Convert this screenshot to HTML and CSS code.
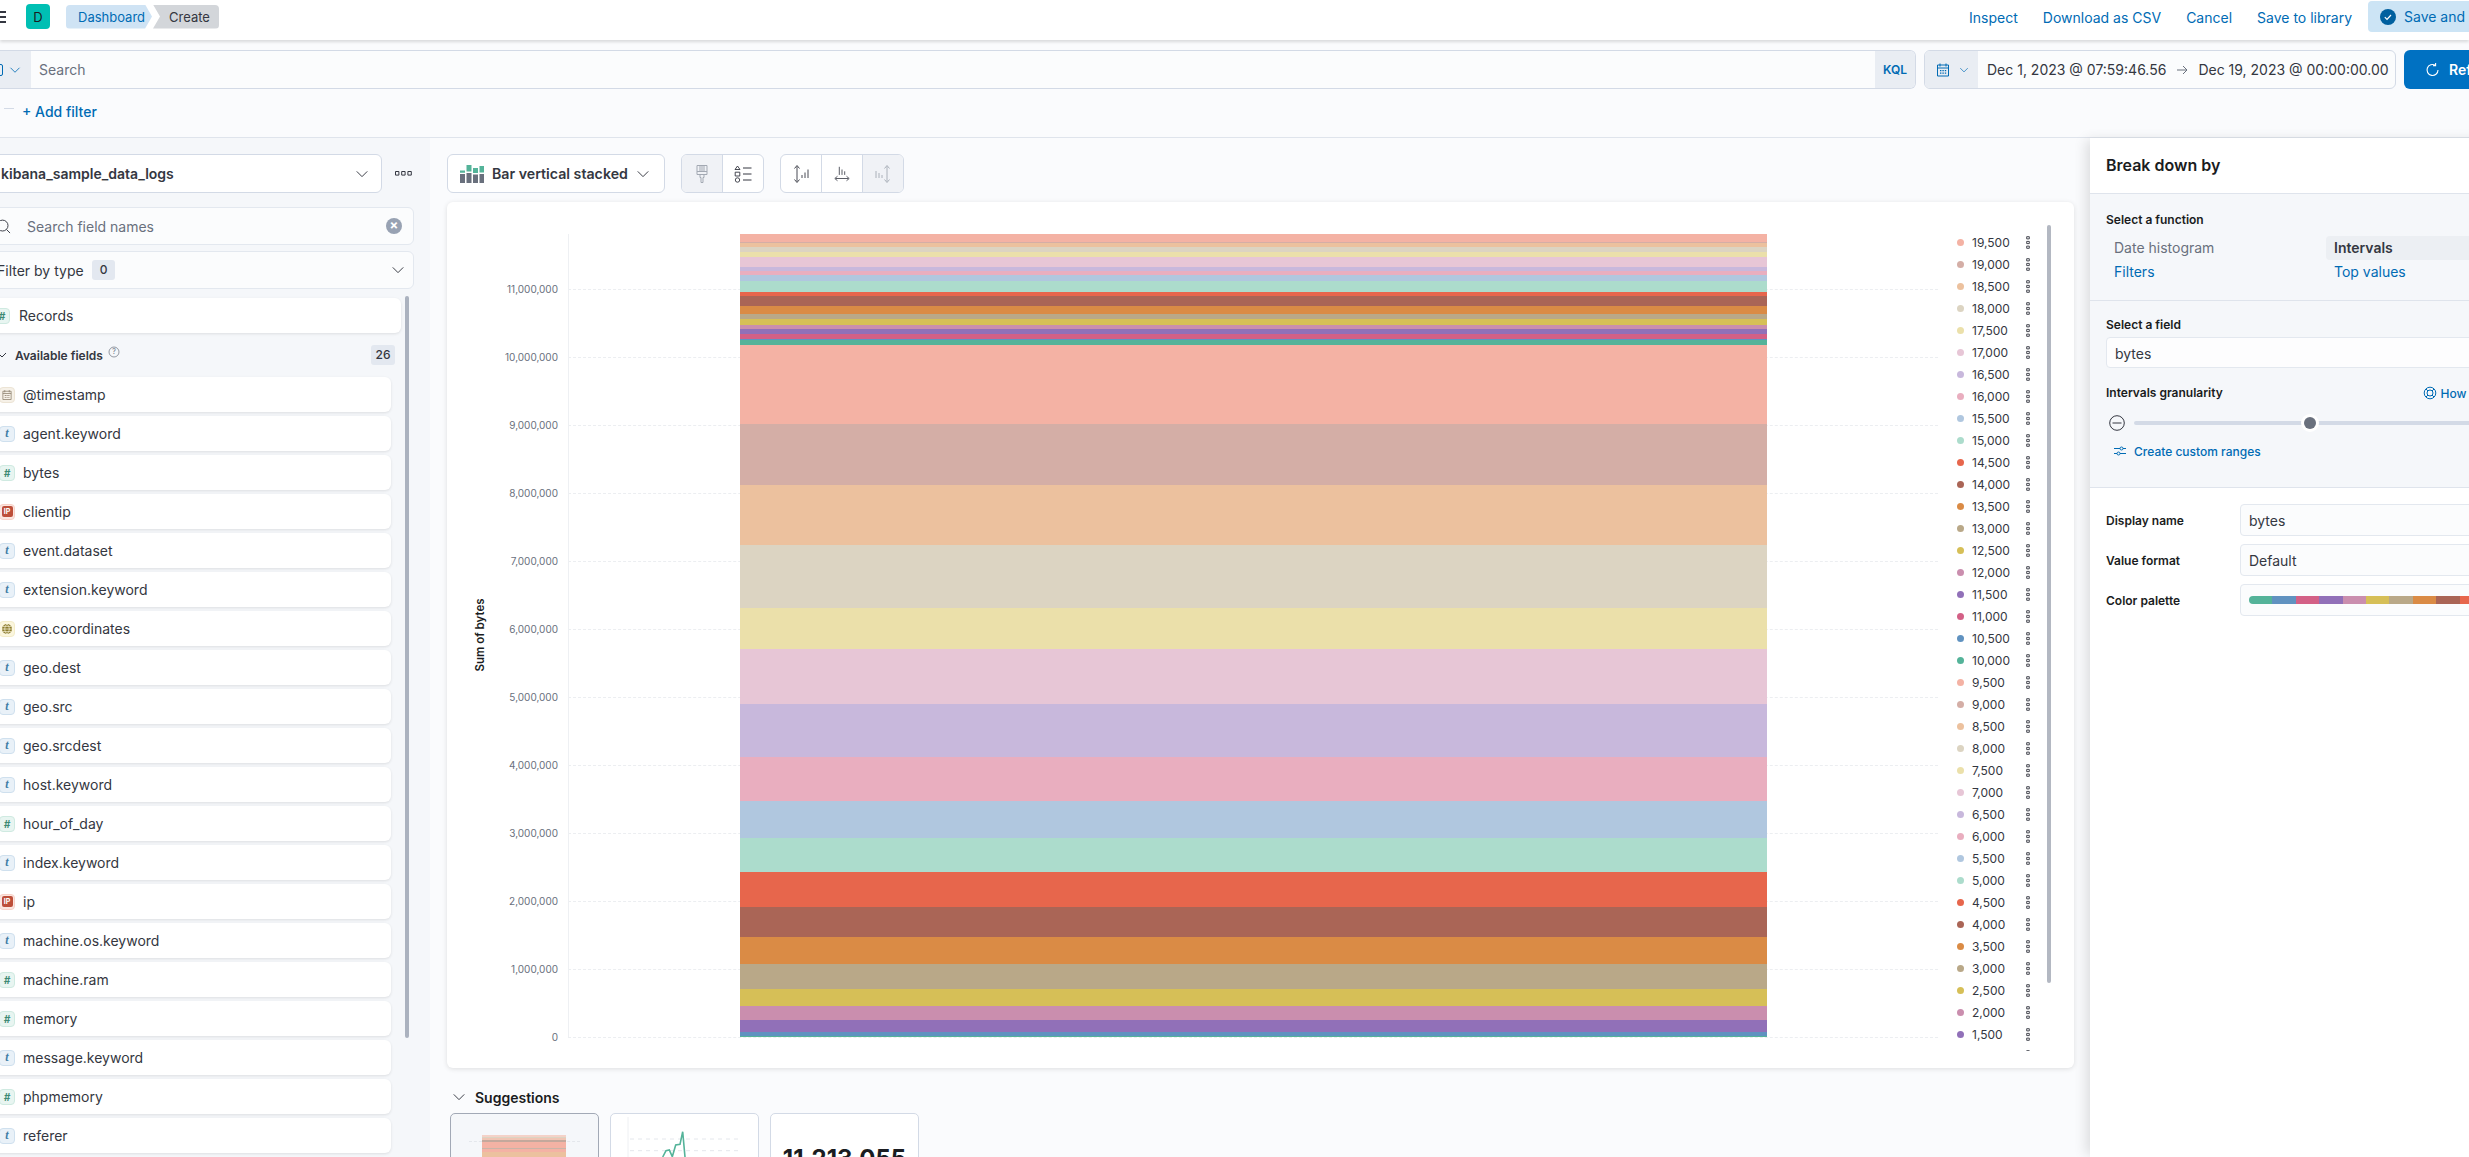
FILE: index.html
```html
<!DOCTYPE html>
<html lang="en">
<head>
  <meta charset="UTF-8" />
  <meta name="viewport" content="width=device-width, initial-scale=1.0" />
  <title>Create - Dashboard</title>
  <link rel="stylesheet" href="styles.css">
</head>

<body>
  <!-- shared icons -->
  <svg class="sprite" aria-hidden="true">
    <symbol id="chev" viewBox="0 0 16 16"><path d="M2 5l6 6 6-6" fill="none" stroke="currentColor" stroke-width="1.1"/></symbol>
    <symbol id="kebab" viewBox="0 0 4 13"><path d="M.7.7h2.6v2.2H.7zM.7 5.4h2.6v2.2H.7zM.7 10.1h2.6v2.2H.7z" fill="none" stroke="currentColor" stroke-width=".9"/></symbol>
    <symbol id="cal" viewBox="0 0 16 16"><path d="M2.5 3h11v11h-11zM2.5 6h11M5 1.5v3M11 1.5v3" fill="none" stroke="currentColor"/><path d="M5 8h1.4v1.2H5zM7.4 8h1.4v1.2H7.4zM9.8 8h1.4v1.2H9.8zM5 10.6h1.4v1.2H5zM7.4 10.6h1.4v1.2H7.4zM9.8 10.6h1.4v1.2H9.8z" fill="currentColor"/></symbol>
  </svg>

  <!-- Top bar -->
  <header class="topbar">
    <div class="burger"><span></span><span></span><span></span></div>
    <div class="avatar">D</div>
    <nav class="crumbs">
      <a class="crumb crumb-link">Dashboard</a>
      <span class="crumb crumb-here">Create</span>
    </nav>
    <div class="top-links">
      <a>Inspect</a>
      <a>Download as CSV</a>
      <a>Cancel</a>
      <a>Save to library</a>
    </div>
    <button class="save-btn">
      <svg viewBox="0 0 16 16"><circle cx="8" cy="8" r="8" fill="#00609f"/><path d="M4.8 8.2l2.2 2.2 4-4.4" fill="none" stroke="#fff" stroke-width="1.2"/></svg>
      Save and return
    </button>
  </header>

  <!-- Query bar -->
  <section class="query">
    <div class="query-row">
      <div class="search-group">
        <div class="saved-btn"><span class="saved-icon"></span><svg class="icon-12"><use href="#chev"/></svg></div>
        <div class="search-input">Search</div>
        <div class="kql">KQL</div>
      </div>
      <div class="date-group">
        <div class="date-btn">
          <svg class="icon-16"><use href="#cal"/></svg>
          <svg class="icon-10"><use href="#chev"/></svg>
        </div>
        <div class="date-range">
          <span>Dec 1, 2023 @ 07:59:46.56</span>
          <svg class="date-arrow" viewBox="0 0 12 12"><path d="M1 6h10M7 2l4 4-4 4" fill="none" stroke="currentColor"/></svg>
          <span>Dec 19, 2023 @ 00:00:00.00</span>
        </div>
      </div>
      <button class="refresh">
        <svg viewBox="0 0 16 16"><path d="M13 8a5.5 5.5 0 1 1-2.6-4.7M10.6 1v2.6H8" fill="none" stroke="#fff" stroke-width="1.1"/></svg>
        Refresh
      </button>
    </div>
    <div class="filter-row">
      <span class="filter-dash"></span>
      <a class="add-filter">+ Add filter</a>
    </div>
  </section>

  <div class="workspace">

    <!-- Field list -->
    <aside class="sidebar">
      <div class="dataview-row">
        <div class="dataview">
          <span>kibana_sample_data_logs</span>
          <svg class="icon-14"><use href="#chev"/></svg>
        </div>
        <svg class="dots" viewBox="0 0 17 5"><path d="M.5.5h3.4v3.6H.5zM6.7.5h3.4v3.6H6.7zM12.9.5h3.4v3.6h-3.4z" fill="none" stroke="#343741"/></svg>
      </div>
      <div class="field-search">
        <svg class="mag" viewBox="0 0 16 16"><circle cx="7" cy="7" r="5.8" fill="none" stroke="#343741"/><path d="M11.2 11.2l3.8 3.8" stroke="#343741"/></svg>
        <span class="field-search-text">Search field names</span>
        <span class="clear">&times;</span>
      </div>
      <div class="filter-type">
        <span>Filter by type</span>
        <span class="count">0</span>
        <svg class="icon-14 push"><use href="#chev"/></svg>
      </div>
      <div class="field records"><span class="ftype ftype-num">#</span>Records</div>
      <div class="avail">
        <svg class="avail-chev" viewBox="0 0 10 10"><path d="M1 3l4 4 4-4" fill="none" stroke="#343741"/></svg>
        <b>Available fields</b>
        <svg class="help" viewBox="0 0 12 12"><circle cx="6" cy="6" r="5" fill="none" stroke="#69707d" stroke-width=".7"/><text x="6" y="8.2" text-anchor="middle">?</text></svg>
        <span class="avail-count">26</span>
      </div>
      <ul class="fields">
        <li class="field"><span class="ftype ftype-date"><svg class="icon-12"><use href="#cal"/></svg></span>@timestamp</li>
        <li class="field"><span class="ftype ftype-text">t</span>agent.keyword</li>
        <li class="field"><span class="ftype ftype-num">#</span>bytes</li>
        <li class="field"><span class="ftype ftype-ip"><i>IP</i></span>clientip</li>
        <li class="field"><span class="ftype ftype-text">t</span>event.dataset</li>
        <li class="field"><span class="ftype ftype-text">t</span>extension.keyword</li>
        <li class="field"><span class="ftype ftype-geo"><svg viewBox="0 0 12 12"><circle cx="6" cy="6" r="5" fill="#8c7c2e"/><path d="M1 6h10M2 3.4h8M2 8.6h8M6 1c-3 3-3 7 0 10M6 1c3 3 3 7 0 10" fill="none" stroke="#fbf6de" stroke-width=".7"/></svg></span>geo.coordinates</li>
        <li class="field"><span class="ftype ftype-text">t</span>geo.dest</li>
        <li class="field"><span class="ftype ftype-text">t</span>geo.src</li>
        <li class="field"><span class="ftype ftype-text">t</span>geo.srcdest</li>
        <li class="field"><span class="ftype ftype-text">t</span>host.keyword</li>
        <li class="field"><span class="ftype ftype-num">#</span>hour_of_day</li>
        <li class="field"><span class="ftype ftype-text">t</span>index.keyword</li>
        <li class="field"><span class="ftype ftype-ip"><i>IP</i></span>ip</li>
        <li class="field"><span class="ftype ftype-text">t</span>machine.os.keyword</li>
        <li class="field"><span class="ftype ftype-num">#</span>machine.ram</li>
        <li class="field"><span class="ftype ftype-num">#</span>memory</li>
        <li class="field"><span class="ftype ftype-text">t</span>message.keyword</li>
        <li class="field"><span class="ftype ftype-num">#</span>phpmemory</li>
        <li class="field"><span class="ftype ftype-text">t</span>referer</li>
      </ul>
      <div class="side-scroll"></div>
    </aside>

    <!-- Chart area -->
    <main class="main">
      <div class="toolbar">
        <div class="chart-switch">
          <svg class="bar-icon" viewBox="0 0 24 18">
            <path d="M0 9h5v9H0zM6.500 8h5v10h-5zM13 9.500h5V18h-5zM19.500 9h4.500v9h-4.500z" fill="#69707d"/>
            <path d="M0 5.500h5v2.300H0zM6.500 0h5v6.500h-5zM13 3h5v5h-5zM19.500 1h4.500v6.500h-4.500z" fill="#54b399"/>
          </svg>
          <span>Bar vertical stacked</span>
          <svg class="icon-14"><use href="#chev"/></svg>
        </div>
        <div class="btn-group">
          <div class="tool tool-off">
            <svg viewBox="0 0 16 20"><path d="M3 1.500h10v9H3zM3 7.500h10M6 1.500v6M8 1.500v6M10 1.500v6M6 10.500v3h1v5h2v-5h1v-3" fill="none" stroke="#a3a9b3"/></svg>
          </div>
          <div class="tool">
            <svg viewBox="0 0 18 18"><path d="M3.500 1L6 4.500H1zM1.200 7.200h4.600v3.800H1.200z" fill="none" stroke="#343741" stroke-width=".9"/><circle cx="3.500" cy="15" r="2.200" fill="none" stroke="#343741" stroke-width=".9"/><path d="M9 3h8.500M9 9h8.500M9 15h8.500" stroke="#343741"/></svg>
          </div>
        </div>
        <div class="btn-group">
          <div class="tool">
            <svg viewBox="0 0 18 20"><path d="M5 2.500v15M2.500 4.500L5 1.500l2.500 3M2.500 15.500L5 18.500l2.500-3M10 11v3M13 8.500v5.500M16 5.500v8.500" fill="none" stroke="#343741" stroke-width=".9"/></svg>
          </div>
          <div class="tool">
            <svg viewBox="0 0 20 20"><path d="M3 15h14M5 12.500L2 15l3 2.500M15 12.500l3 2.500-3 2.500M7 2v9M10 5v6M13 7v4" fill="none" stroke="#343741" stroke-width=".9"/></svg>
          </div>
          <div class="tool tool-off">
            <svg viewBox="0 0 18 20"><path d="M13 2.500v15M10.500 4.500l2.500-3 2.500 3M10.500 15.500l2.500 3 2.500-3M2 7v7M5 9v5M8 11v3" fill="none" stroke="#a3a9b3" stroke-width=".9"/></svg>
          </div>
        </div>
      </div>

      <div class="chart-card">
        <div class="plot">
          <div class="axis-title">Sum of bytes</div>
          <div class="axis-line"></div>
          <div class="ticks">
            <div class="tick"><span>11,000,000</span><i></i></div>
            <div class="tick"><span>10,000,000</span><i></i></div>
            <div class="tick"><span>9,000,000</span><i></i></div>
            <div class="tick"><span>8,000,000</span><i></i></div>
            <div class="tick"><span>7,000,000</span><i></i></div>
            <div class="tick"><span>6,000,000</span><i></i></div>
            <div class="tick"><span>5,000,000</span><i></i></div>
            <div class="tick"><span>4,000,000</span><i></i></div>
            <div class="tick"><span>3,000,000</span><i></i></div>
            <div class="tick"><span>2,000,000</span><i></i></div>
            <div class="tick"><span>1,000,000</span><i></i></div>
            <div class="tick"><span>0</span><i></i></div>
          </div>
          <div class="bar">
            <div class="s1" style="height:7.7px"></div>
            <div class="s2" style="height:1.7px"></div>
            <div class="s3" style="height:4px"></div>
            <div class="s4" style="height:5px"></div>
            <div class="s5" style="height:4.7px"></div>
            <div class="s6" style="height:9.6px"></div>
            <div class="s7" style="height:4.3px"></div>
            <div class="s8" style="height:4.4px"></div>
            <div class="s9" style="height:6px"></div>
            <div class="s10" style="height:10.6px"></div>
            <div class="s11" style="height:3.7px"></div>
            <div class="s12" style="height:10.3px"></div>
            <div class="s13" style="height:8px"></div>
            <div class="s14" style="height:5.3px"></div>
            <div class="s15" style="height:5.7px"></div>
            <div class="s16" style="height:4.3px"></div>
            <div class="s17" style="height:4.3px"></div>
            <div class="s18" style="height:5.3px"></div>
            <div class="s19" style="height:1.4px"></div>
            <div class="s20" style="height:4.7px"></div>
            <div class="s1" style="height:79px"></div>
            <div class="s2" style="height:61px"></div>
            <div class="s3" style="height:60px"></div>
            <div class="s4" style="height:63px"></div>
            <div class="s5" style="height:41px"></div>
            <div class="s6" style="height:55px"></div>
            <div class="s7" style="height:53px"></div>
            <div class="s8" style="height:44px"></div>
            <div class="s9" style="height:37px"></div>
            <div class="s10" style="height:34px"></div>
            <div class="s11" style="height:35px"></div>
            <div class="s12" style="height:30px"></div>
            <div class="s13" style="height:27px"></div>
            <div class="s14" style="height:25px"></div>
            <div class="s15" style="height:17px"></div>
            <div class="s16" style="height:14.5px"></div>
            <div class="s17" style="height:11.5px"></div>
            <div class="s19" style="height:4px"></div>
            <div class="s20" style="height:1px"></div>
          </div>
        </div>

        <ul class="legend">
          <li><i></i><span>19,500</span><svg><use href="#kebab"/></svg></li>
          <li><i></i><span>19,000</span><svg><use href="#kebab"/></svg></li>
          <li><i></i><span>18,500</span><svg><use href="#kebab"/></svg></li>
          <li><i></i><span>18,000</span><svg><use href="#kebab"/></svg></li>
          <li><i></i><span>17,500</span><svg><use href="#kebab"/></svg></li>
          <li><i></i><span>17,000</span><svg><use href="#kebab"/></svg></li>
          <li><i></i><span>16,500</span><svg><use href="#kebab"/></svg></li>
          <li><i></i><span>16,000</span><svg><use href="#kebab"/></svg></li>
          <li><i></i><span>15,500</span><svg><use href="#kebab"/></svg></li>
          <li><i></i><span>15,000</span><svg><use href="#kebab"/></svg></li>
          <li><i></i><span>14,500</span><svg><use href="#kebab"/></svg></li>
          <li><i></i><span>14,000</span><svg><use href="#kebab"/></svg></li>
          <li><i></i><span>13,500</span><svg><use href="#kebab"/></svg></li>
          <li><i></i><span>13,000</span><svg><use href="#kebab"/></svg></li>
          <li><i></i><span>12,500</span><svg><use href="#kebab"/></svg></li>
          <li><i></i><span>12,000</span><svg><use href="#kebab"/></svg></li>
          <li><i></i><span>11,500</span><svg><use href="#kebab"/></svg></li>
          <li><i></i><span>11,000</span><svg><use href="#kebab"/></svg></li>
          <li><i></i><span>10,500</span><svg><use href="#kebab"/></svg></li>
          <li><i></i><span>10,000</span><svg><use href="#kebab"/></svg></li>
          <li><i></i><span>9,500</span><svg><use href="#kebab"/></svg></li>
          <li><i></i><span>9,000</span><svg><use href="#kebab"/></svg></li>
          <li><i></i><span>8,500</span><svg><use href="#kebab"/></svg></li>
          <li><i></i><span>8,000</span><svg><use href="#kebab"/></svg></li>
          <li><i></i><span>7,500</span><svg><use href="#kebab"/></svg></li>
          <li><i></i><span>7,000</span><svg><use href="#kebab"/></svg></li>
          <li><i></i><span>6,500</span><svg><use href="#kebab"/></svg></li>
          <li><i></i><span>6,000</span><svg><use href="#kebab"/></svg></li>
          <li><i></i><span>5,500</span><svg><use href="#kebab"/></svg></li>
          <li><i></i><span>5,000</span><svg><use href="#kebab"/></svg></li>
          <li><i></i><span>4,500</span><svg><use href="#kebab"/></svg></li>
          <li><i></i><span>4,000</span><svg><use href="#kebab"/></svg></li>
          <li><i></i><span>3,500</span><svg><use href="#kebab"/></svg></li>
          <li><i></i><span>3,000</span><svg><use href="#kebab"/></svg></li>
          <li><i></i><span>2,500</span><svg><use href="#kebab"/></svg></li>
          <li><i></i><span>2,000</span><svg><use href="#kebab"/></svg></li>
          <li><i></i><span>1,500</span><svg><use href="#kebab"/></svg></li>
          <li><i></i><span>1,000</span><svg><use href="#kebab"/></svg></li>
        </ul>
        <div class="legend-scroll"></div>
      </div>

      <div class="sugg-title">
        <svg class="icon-14"><use href="#chev"/></svg>
        <b>Suggestions</b>
      </div>
      <div class="sugg-row">
        <div class="sugg sugg-active">
          <i class="sugg-grid"></i>
          <div class="sugg-bar"></div>
        </div>
        <div class="sugg">
          <svg class="sugg-line" viewBox="0 0 149 44">
            <path d="M18 4v40" stroke="#eef0f3" fill="none"/>
            <path d="M20 26h112M20 37.700h112" stroke="#e4e7ec" stroke-dasharray="4 4" fill="none"/>
            <path d="M52.700 44L56 37.700 59.300 37 62.300 43.700 65.700 32 70 31.300 72.700 18.700 75 44" stroke="#54b399" stroke-width="1.600" fill="none"/>
          </svg>
        </div>
        <div class="sugg sugg-num">11,213,055</div>
      </div>
    </main>

    <!-- Dimension panel -->
    <aside class="panel">
      <h2 class="panel-head">Break down by</h2>
      <section class="panel-fn">
        <div class="lbl">Select a function</div>
        <div class="fn-grid">
          <span class="fn fn-off">Date histogram</span>
          <span class="fn fn-on">Intervals</span>
          <a class="fn">Filters</a>
          <a class="fn">Top values</a>
        </div>
      </section>
      <section class="panel-field">
        <div class="lbl">Select a field</div>
        <div class="box box-field">bytes</div>
        <div class="gran-head">
          <div class="lbl">Intervals granularity</div>
          <a class="how">
            <svg viewBox="0 0 14 14"><circle cx="7" cy="7" r="5.800" fill="none" stroke="#006bb4"/><circle cx="7" cy="7" r="3" fill="none" stroke="#006bb4"/><path d="M3 3l2 2M11 3L9 5M3 11l2-2M11 11L9 9" stroke="#006bb4"/></svg>
            How it works
          </a>
        </div>
        <div class="slider">
          <svg class="minus" viewBox="0 0 16 16"><circle cx="8" cy="8" r="7.300" fill="none" stroke="#343741"/><path d="M3.500 8h9" stroke="#343741"/></svg>
          <div class="track"><span class="thumb"></span></div>
        </div>
        <a class="custom">
          <svg viewBox="0 0 14 14"><path d="M1 4.500h6M10 4.500h3M1 9.500h3M7 9.500h6" stroke="#006bb4"/><circle cx="8.500" cy="4.500" r="1.500" fill="none" stroke="#006bb4"/><circle cx="5.500" cy="9.500" r="1.500" fill="none" stroke="#006bb4"/></svg>
          Create custom ranges
        </a>
      </section>
      <section class="panel-style">
        <div class="style-row"><label>Display name</label><div class="box">bytes</div></div>
        <div class="style-row"><label>Value format</label><div class="box">Default</div></div>
        <div class="style-row">
          <label>Color palette</label>
          <div class="box">
            <div class="palette">
              <i class="s20"></i><i class="s19"></i><i class="s18"></i><i class="s17"></i><i class="s16"></i><i class="s15"></i><i class="s14"></i><i class="s13"></i><i class="s12"></i><i class="s11"></i>
            </div>
          </div>
        </div>
      </section>
    </aside>
  </div>
</body>
</html>
```

FILE: styles.css
```css
/* ---------- Page ---------- */
:root {
  --c1: #f4b2a4; --c2: #d4aea6; --c3: #ecc19e; --c4: #dcd4c2; --c5: #ebe0aa;
  --c6: #e7c6d6; --c7: #c8b8dc; --c8: #e9aebf; --c9: #b0c7df; --c10: #acdccc;
  --c11: #e7664c; --c12: #aa6556; --c13: #da8b45; --c14: #b9a888; --c15: #d6bf57;
  --c16: #ca8eae; --c17: #9170b8; --c18: #d36086; --c19: #6092c0; --c20: #54b399;
  --link: #006bb4;
  --text: #343741;
  --line: #d3dae6;
}
html, body { height: 100%; overflow: hidden; }
body {
  margin: 0;
  font-family: Inter, "Noto Sans", sans-serif;
  font-size: 14px;
  color: var(--text);
  background: #fafbfd;
  display: flex;
  flex-direction: column;
}
ul { list-style: none; margin: 0; padding: 0; }
a { color: var(--link); }
button { font: inherit; border: 0; }
.sprite { display: none; }
.icon-10 { width: 10px; height: 10px; }
.icon-12 { width: 12px; height: 12px; }
.icon-14 { width: 14px; height: 14px; flex: none; }
.icon-16 { width: 16px; height: 16px; }
.push { margin-left: auto; }

/* ---------- Top bar ---------- */
.topbar {
  height: 40px;
  flex: none;
  display: flex;
  align-items: center;
  background: #fff;
  box-shadow: 0 2px 3px #0002;
  position: relative;
  z-index: 2;
}
.burger {
  width: 16px;
  margin-left: -10px;
  margin-top: -7px;
  display: flex;
  flex-direction: column;
  gap: 3px;
}
.burger span { height: 2px; background: #343741; }
.avatar {
  width: 24px;
  height: 25px;
  margin-left: 20px;
  margin-top: -7px;
  border-radius: 4px;
  background: #00bfb3;
  color: #1a1c21;
  font-size: 13px;
  display: flex;
  align-items: center;
  justify-content: center;
}
.crumbs { display: flex; margin-left: 16px; margin-top: -7px; }
.crumb {
  height: 24px;
  display: flex;
  align-items: center;
  font-size: 13px;
}
.crumb-link {
  width: 86px;
  padding-left: 12px;
  box-sizing: border-box;
  background: #cfe3f4;
  color: var(--link);
  border-radius: 4px 0 0 4px;
  clip-path: polygon(0 0, 92% 0, 100% 50%, 92% 100%, 0 100%);
}
.crumb-here {
  width: 66px;
  padding-left: 16px;
  box-sizing: border-box;
  margin-left: 1px;
  background: #d3d6da;
  border-radius: 0 4px 4px 0;
  clip-path: polygon(0 0, 100% 0, 100% 100%, 0 100%, 7px 50%);
}
.top-links {
  margin-left: auto;
  display: flex;
  gap: 25px;
  margin-top: -6px;
}
.save-btn {
  width: 160px;
  height: 31px;
  margin: -7px -59px 0 16px;
  padding: 0 0 0 12px;
  display: flex;
  align-items: center;
  gap: 8px;
  background: #cce4f5;
  color: var(--link);
  border-radius: 4px;
  white-space: nowrap;
  flex: none;
}
.save-btn svg { width: 16px; height: 16px; flex: none; }

/* ---------- Query bar ---------- */
.query {
  flex: none;
  height: 97px;
  border-bottom: 1px solid #dfe4ec;
  box-sizing: content-box;
}
.query-row {
  display: flex;
  margin-top: 10px;
  height: 39px;
  gap: 8px;
}
.search-group, .date-group {
  display: flex;
  border: 1px solid var(--line);
  border-radius: 6px;
  background: #fbfcfd;
  box-sizing: border-box;
  overflow: hidden;
}
.search-group { flex: 1; border-left: 0; border-radius: 0 6px 6px 0; }
.saved-btn {
  width: 31px;
  background: #e9edf3;
  color: var(--link);
  display: flex;
  align-items: center;
  justify-content: space-between;
  padding-right: 10px;
  box-sizing: border-box;
}
.saved-icon {
  width: 12px;
  height: 12px;
  margin-left: -9px;
  border: 1px solid var(--link);
  border-radius: 2px;
  box-sizing: border-box;
}
.search-input {
  flex: 1;
  padding-left: 8px;
  display: flex;
  align-items: center;
  color: #69707d;
}
.kql {
  width: 40px;
  background: #e9edf3;
  color: var(--link);
  font-size: 12px;
  font-weight: 600;
  display: flex;
  align-items: center;
  justify-content: center;
}
.date-group { width: 472px; flex: none; }
.date-btn {
  width: 53px;
  background: #e9edf3;
  color: var(--link);
  display: flex;
  align-items: center;
  justify-content: center;
  gap: 8px;
}
.date-range {
  flex: 1;
  display: flex;
  align-items: center;
  padding-left: 9px;
  white-space: nowrap;
}
.date-arrow { width: 12px; height: 12px; margin: 0 10px; color: #69707d; flex: none; }
.refresh {
  width: 115px;
  margin-right: -50px;
  flex: none;
  display: flex;
  align-items: center;
  padding-left: 21px;
  gap: 8px;
  background: #0071c2;
  color: #fff;
  font-weight: 600;
  border-radius: 6px;
  white-space: nowrap;
}
.refresh svg { width: 16px; height: 16px; flex: none; }
.filter-row {
  display: flex;
  align-items: center;
  height: 24px;
  margin-top: 10px;
  font-weight: 500;
}
.filter-dash { width: 10px; height: 1px; margin: -6px 8px 0 4px; background: #d3dae6; }

/* ---------- Layout ---------- */
.workspace {
  flex: 1;
  min-height: 0;
  display: flex;
}

/* ---------- Sidebar ---------- */
.sidebar {
  width: 442px;
  margin-left: -12px;
  flex: none;
  box-sizing: border-box;
  padding: 16px 16px 0 0;
  background: #f5f7fa;
  position: relative;
}
.dataview-row { display: flex; align-items: center; gap: 13px; }
.dataview {
  width: 394px;
  height: 39px;
  box-sizing: border-box;
  padding: 0 12px;
  display: flex;
  align-items: center;
  justify-content: space-between;
  background: #fff;
  border: 1px solid var(--line);
  border-radius: 6px;
  font-weight: 600;
}
.dots { width: 17px; height: 5px; }
.field-search, .filter-type {
  width: 426px;
  height: 38px;
  box-sizing: border-box;
  display: flex;
  align-items: center;
  border: 1px solid #e3e8ef;
  border-radius: 6px;
  background: #fbfcfd;
}
.field-search { margin-top: 14px; padding: 0 11px 0 7px; position: relative; }
.mag { width: 15px; height: 15px; }
.field-search-text { margin-left: 16px; color: #69707d; }
.clear {
  margin-left: auto;
  width: 16px;
  height: 16px;
  border-radius: 50%;
  background: #98a2b3;
  color: #fff;
  font-size: 13px;
  font-weight: 700;
  line-height: 15px;
  text-align: center;
}
.filter-type { margin-top: 6px; padding: 0 8px 0 8px; }
.count {
  margin-left: 8px;
  padding: 0 8px;
  height: 20px;
  line-height: 20px;
  font-size: 12px;
  font-weight: 500;
  background: #e3e8f0;
  border-radius: 3px;
}
.field {
  height: 35px;
  display: flex;
  align-items: center;
  gap: 8px;
  background: #fff;
  border-radius: 6px;
  box-shadow: 0 1px 3px #0000001a;
  padding-left: 11px;
}
.records {
  margin-top: 9px;
  margin-left: 0;
  width: 407px;
  padding-left: 6px;
  gap: 9px;
}
.avail {
  width: 407px;
  height: 20px;
  margin: 12px 0;
  display: flex;
  align-items: center;
  font-size: 12px;
  padding-left: 9px;
  box-sizing: border-box;
}
.avail-chev { width: 10px; height: 10px; margin-right: 8px; }
.avail b { font-weight: 600; }
.help { width: 12px; height: 12px; margin: -6px 0 0 5px; }
.help text { font-size: 7px; fill: #69707d; font-family: Inter, sans-serif; }
.avail-count {
  margin-left: auto;
  width: 24px;
  height: 20px;
  line-height: 20px;
  text-align: center;
  font-weight: 500;
  background: #e3e8f0;
  border-radius: 3px;
}
.fields { width: 403px; display: flex; flex-direction: column; gap: 4px; }
.ftype {
  width: 16px;
  height: 16px;
  flex: none;
  box-sizing: border-box;
  border-radius: 4px;
  border: 1px solid;
  display: flex;
  align-items: center;
  justify-content: center;
  font-size: 10px;
  font-weight: 700;
}
.ftype svg { width: 12px; height: 12px; }
.ftype-text { background: #e9f1f8; border-color: #cfe0ee; color: #3f7ea6; font-family: "Liberation Serif", serif; font-style: italic; font-size: 12px; }
.ftype-num { background: #e8f5f1; border-color: #cfeae1; color: #3d8a74; font-style: italic; }
.ftype-ip { background: #fbe6e0; border-color: #f8d2c8; }
.ftype-ip i {
  width: 11px;
  height: 11px;
  border-radius: 2px;
  background: #bd4f3a;
  color: #fff;
  font-size: 7px;
  font-style: normal;
  line-height: 11px;
  text-align: center;
}
.ftype-geo { background: #fbf6de; border-color: #f3ecc8; }
.ftype-date { background: #f6f1e8; border-color: #ece4d5; color: #8a7c6a; }
.side-scroll {
  position: absolute;
  left: 417px;
  top: 158px;
  width: 4px;
  height: 742px;
  border-radius: 2px;
  background: #abb2bf;
}

/* ---------- Main ---------- */
.main {
  flex: 1;
  min-width: 0;
  padding: 16px 16px 0 17px;
  box-sizing: border-box;
}
.toolbar { display: flex; gap: 16px; height: 39px; margin-bottom: 9px; }
.chart-switch {
  width: 218px;
  box-sizing: border-box;
  padding: 0 12px;
  display: flex;
  align-items: center;
  gap: 8px;
  background: #fff;
  border: 1px solid var(--line);
  border-radius: 6px;
  font-size: 14.2px;
  font-weight: 600;
  white-space: nowrap;
}
.bar-icon { width: 24px; height: 18px; flex: none; }
.btn-group {
  display: flex;
  border: 1px solid var(--line);
  border-radius: 6px;
  overflow: hidden;
  background: #fff;
}
.tool {
  width: 40px;
  display: flex;
  align-items: center;
  justify-content: center;
  border-left: 1px solid var(--line);
}
.tool:first-child { border-left: 0; }
.tool svg { width: 18px; height: 20px; }
.tool-off { background: #f0f2f6; }
.chart-card {
  height: 866px;
  display: flex;
  background: #fff;
  border-radius: 6px;
  box-shadow: 0 1px 5px #0000001f;
  position: relative;
  padding-top: 29px;
  box-sizing: border-box;
}
.plot { flex: 1; position: relative; padding-right: 12px; }
.axis-title {
  position: absolute;
  left: 33px;
  top: 404px;
  transform: translate(-50%, -50%) rotate(-90deg);
  font-size: 11.500px;
  font-weight: 600;
  color: #1a1c21;
  white-space: nowrap;
}
.axis-line {
  position: absolute;
  left: 121px;
  top: 3px;
  width: 1px;
  height: 803px;
  background: #eef0f3;
}
.ticks {
  padding-top: 58px;
  display: flex;
  flex-direction: column;
  gap: 68px;
}
.tick { height: 0; display: flex; align-items: center; gap: 10px; }
.tick span {
  width: 111px;
  flex: none;
  text-align: right;
  font-size: 10px;
  color: #69707d;
}
.tick i { flex: 1; border-top: 1px dashed #eceef1; }
.bar {
  position: absolute;
  left: 293px;
  top: 3px;
  width: 1027px;
  display: flex;
  flex-direction: column;
}
.s1 { background: var(--c1); } .s2 { background: var(--c2); } .s3 { background: var(--c3); }
.s4 { background: var(--c4); } .s5 { background: var(--c5); } .s6 { background: var(--c6); }
.s7 { background: var(--c7); } .s8 { background: var(--c8); } .s9 { background: var(--c9); }
.s10 { background: var(--c10); } .s11 { background: var(--c11); } .s12 { background: var(--c12); }
.s13 { background: var(--c13); } .s14 { background: var(--c14); } .s15 { background: var(--c15); }
.s16 { background: var(--c16); } .s17 { background: var(--c17); } .s18 { background: var(--c18); }
.s19 { background: var(--c19); } .s20 { background: var(--c20); }

/* ---------- Legend ---------- */
.legend {
  width: 124px;
  height: 820px;
  flex: none;
  overflow: hidden;
  font-size: 12px;
}
.legend li {
  height: 22px;
  display: flex;
  align-items: center;
  padding-left: 7px;
}
.legend i { width: 7px; height: 7px; border-radius: 50%; margin-right: 8px; flex: none; }
.legend span { width: 54px; }
.legend svg { width: 4px; height: 13px; color: #343741; }
.legend li:nth-child(20n+1) i { background: var(--c1); }
.legend li:nth-child(20n+2) i { background: var(--c2); }
.legend li:nth-child(20n+3) i { background: var(--c3); }
.legend li:nth-child(20n+4) i { background: var(--c4); }
.legend li:nth-child(20n+5) i { background: var(--c5); }
.legend li:nth-child(20n+6) i { background: var(--c6); }
.legend li:nth-child(20n+7) i { background: var(--c7); }
.legend li:nth-child(20n+8) i { background: var(--c8); }
.legend li:nth-child(20n+9) i { background: var(--c9); }
.legend li:nth-child(20n+10) i { background: var(--c10); }
.legend li:nth-child(20n+11) i { background: var(--c11); }
.legend li:nth-child(20n+12) i { background: var(--c12); }
.legend li:nth-child(20n+13) i { background: var(--c13); }
.legend li:nth-child(20n+14) i { background: var(--c14); }
.legend li:nth-child(20n+15) i { background: var(--c15); }
.legend li:nth-child(20n+16) i { background: var(--c16); }
.legend li:nth-child(20n+17) i { background: var(--c17); }
.legend li:nth-child(20n+18) i { background: var(--c18); }
.legend li:nth-child(20n+19) i { background: var(--c19); }
.legend li:nth-child(20n) i { background: var(--c20); }
.legend-scroll {
  position: absolute;
  left: 1600px;
  top: 23px;
  width: 4px;
  height: 758px;
  border-radius: 2px;
  background: #b3b8c2;
}

/* ---------- Suggestions ---------- */
.sugg-title {
  margin-top: 21px;
  height: 16px;
  display: flex;
  align-items: center;
  gap: 9px;
  padding-left: 5px;
}
.sugg-title b { font-weight: 600; color: #1a1c21; }
.sugg-row { display: flex; gap: 11px; margin: 8px 0 0 3px; }
.sugg {
  width: 149px;
  height: 80px;
  flex: none;
  box-sizing: border-box;
  background: #fff;
  border: 1px solid var(--line);
  border-radius: 5px;
  position: relative;
  overflow: hidden;
}
.sugg-active { background: #f5f7fa; border-color: #a2a9b6; }
.sugg-grid {
  position: absolute;
  left: 18px;
  right: 18px;
  top: 27px;
  border-top: 1px dashed #e4e7ec;
}
.sugg-bar {
  position: absolute;
  left: 31px;
  width: 84px;
  top: 21px;
  height: 60px;
  background: linear-gradient(180deg, #f4d2c8 0 2px, #dcd4c2 2px 3px, #f0c5b4 3px 5px, #c4a89c 5px 7px, #f4b2a4 7px 13px, #c9b4a8 13px 14px, #f4b2a4 14px 17px, #ecc19e 17px 22px, #dcd4c2 22px 24px, #ebe0aa 24px 27px, #e7c6d6 27px 60px);
}
.sugg-line { position: absolute; left: -1px; top: -1px; width: 149px; height: 44px; }
.sugg-num {
  padding-top: 33px;
  font-size: 24px;
  line-height: 24px;
  font-weight: 700;
  color: #1a1c21;
  text-align: center;
}

/* ---------- Right panel ---------- */
.panel {
  width: 430px;
  flex: none;
  margin-right: -51px;
  background: #fff;
  box-shadow: -6px 0 12px -2px #0000001f;
  position: relative;
}
.panel-head {
  margin: 0;
  height: 56px;
  box-sizing: border-box;
  line-height: 55px;
  padding-left: 16px;
  font-size: 16px;
  font-weight: 600;
  color: #1a1c21;
  border-bottom: 1px solid #dfe4ec;
}
.lbl { font-size: 12px; font-weight: 600; line-height: 16px; color: #1a1c21; }
.panel-fn {
  padding: 18px 0 16px 16px;
  background: #f5f7fa;
  border-bottom: 1px solid #dfe4ec;
}
.fn-grid {
  margin-top: 8px;
  display: grid;
  grid-template-columns: 220px 1fr;
  grid-auto-rows: 24px;
}
.fn { padding-left: 8px; line-height: 24px; }
.fn-off { color: #69707d; }
.fn-on { background: #eceff3; font-weight: 600; border-radius: 4px 0 0 4px; }
.panel-field {
  padding: 16px 0 28px 16px;
  background: #f5f7fa;
  border-bottom: 1px solid #dfe4ec;
}
.box {
  height: 32px;
  box-sizing: border-box;
  padding-left: 8px;
  display: flex;
  align-items: center;
  border: 1px solid #e3e8ef;
  border-radius: 4px;
  background: #fbfcfd;
  flex: 1;
}
.box-field { margin-top: 4px; height: 31px; background: #fdfdfe; padding-top: 2px; }
.gran-head {
  display: flex;
  justify-content: space-between;
  align-items: center;
  margin-top: 17px;
  padding-right: 5px;
}
.how { display: flex; align-items: center; gap: 4px; font-size: 12px; font-weight: 500; }
.how svg { width: 14px; height: 14px; }
.slider {
  margin: 14px 0 0 3px;
  height: 16px;
  display: flex;
  align-items: center;
  gap: 9px;
}
.minus { width: 16px; height: 16px; flex: none; }
.track {
  flex: 1;
  height: 4px;
  background: var(--line);
  border-radius: 2px;
  position: relative;
}
.thumb {
  position: absolute;
  left: 170px;
  top: -4px;
  width: 12px;
  height: 12px;
  border-radius: 50%;
  background: #69707d;
  box-shadow: 0 0 0 3px #fff;
}
.custom {
  margin: 12px 0 0 7px;
  height: 16px;
  display: flex;
  align-items: center;
  gap: 7px;
  font-size: 12px;
  font-weight: 500;
}
.custom svg { width: 14px; height: 14px; }
.panel-style { padding: 16px 0 0 16px; display: flex; flex-direction: column; gap: 8px; }
.style-row { display: flex; align-items: center; }
.style-row label { width: 134px; flex: none; font-size: 12px; font-weight: 600; color: #1a1c21; }
.palette { display: flex; height: 8px; flex: 1; border-radius: 4px 0 0 4px; overflow: hidden; }
.palette i { width: 23.400px; flex: none; }
```
